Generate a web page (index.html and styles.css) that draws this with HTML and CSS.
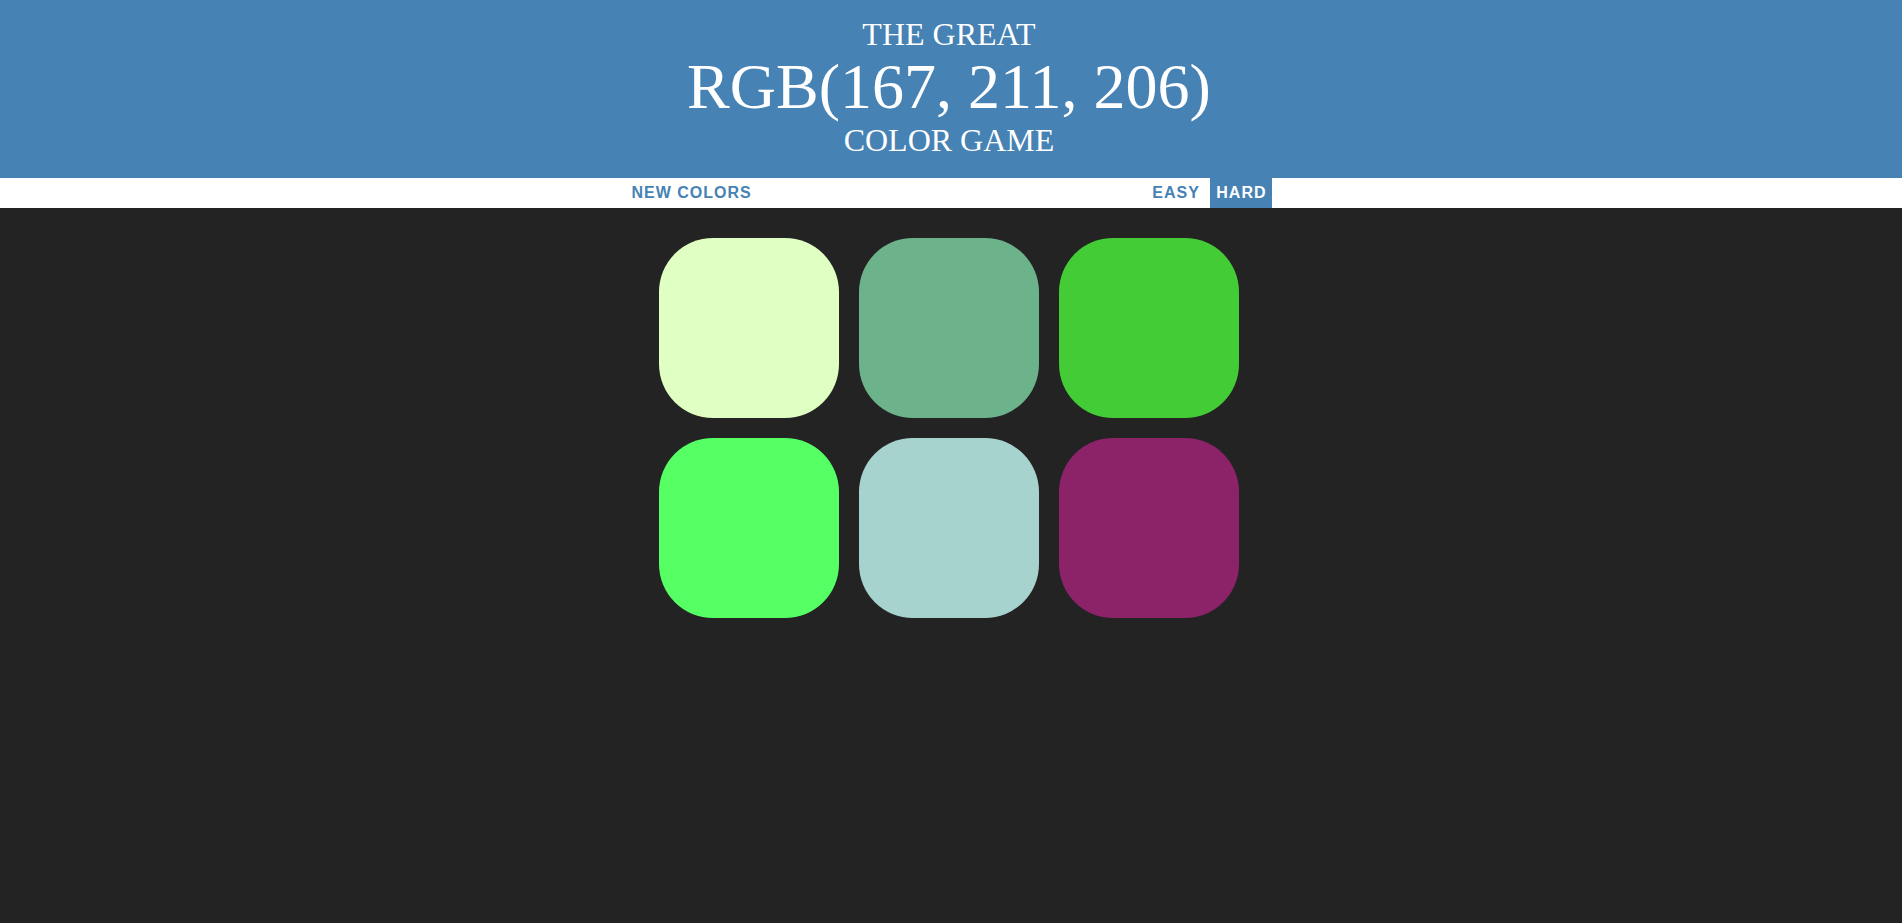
FILE: index.html
```html
<!DOCTYPE html>
<html>
<head>
<meta charset="utf-8">
<title>Color Game</title>
<link rel="stylesheet" href="styles.css">
</head>
<body>
<h1 class="title">The Great<br><span class="color-display">RGB(167, 211, 206)</span><br>Color Game</h1>
<div class="stripe">
  <div class="stripe-inner">
    <button class="btn">New Colors</button>
    <span class="message"></span>
    <button class="btn mode">Easy</button>
    <button class="btn mode selected">Hard</button>
  </div>
</div>
<div class="board">
  <div class="container">
    <div class="square sq1"></div>
    <div class="square sq2"></div>
    <div class="square sq3"></div>
    <div class="square sq4"></div>
    <div class="square sq5"></div>
    <div class="square sq6"></div>
  </div>
</div>
</body>
</html>
```
FILE: styles.css
```css
html, body {
  margin: 0;
  padding: 0;
}
body {
  background: #232323;
  font-family: "Liberation Sans", Arial, sans-serif;
  min-height: 923px;
}
.title {
  margin: 0;
  padding: 17px 4px 20px 0;
  background: steelblue;
  color: #ffffff;
  text-align: center;
  font-family: "Liberation Serif", "Times New Roman", serif;
  font-weight: normal;
  font-size: 32px;
  line-height: 1.1;
  text-transform: uppercase;
}
.color-display {
  font-size: 200%;
}
.stripe {
  background: #ffffff;
  height: 30px;
}
.stripe-inner {
  height: 100%;
  padding-right: 4px;
  text-align: center;
  font-size: 16px;
}
.btn {
  border: none;
  background: none;
  height: 100%;
  margin: 0;
  padding: 0 6px;
  font-family: "Liberation Sans", Arial, sans-serif;
  font-size: 16px;
  font-weight: 700;
  letter-spacing: 1px;
  text-transform: uppercase;
  color: steelblue;
  vertical-align: top;
  cursor: pointer;
}
.btn.selected {
  background: steelblue;
  color: #ffffff;
}
.message {
  display: inline-block;
  width: 20%;
}
.board {
  padding-right: 4px;
}
.container {
  max-width: 600px;
  margin: 20px auto 0;
  display: flex;
  flex-wrap: wrap;
}
.square {
  width: 30%;
  aspect-ratio: 1 / 1;
  margin: 1.66%;
  border-radius: 30%;
}
.sq1 { background: #e0ffc2; }
.sq2 { background: #6cb28a; }
.sq3 { background: #43cc35; }
.sq4 { background: #55ff64; }
.sq5 { background: rgb(167, 211, 206); }
.sq6 { background: #8c2268; }
```
